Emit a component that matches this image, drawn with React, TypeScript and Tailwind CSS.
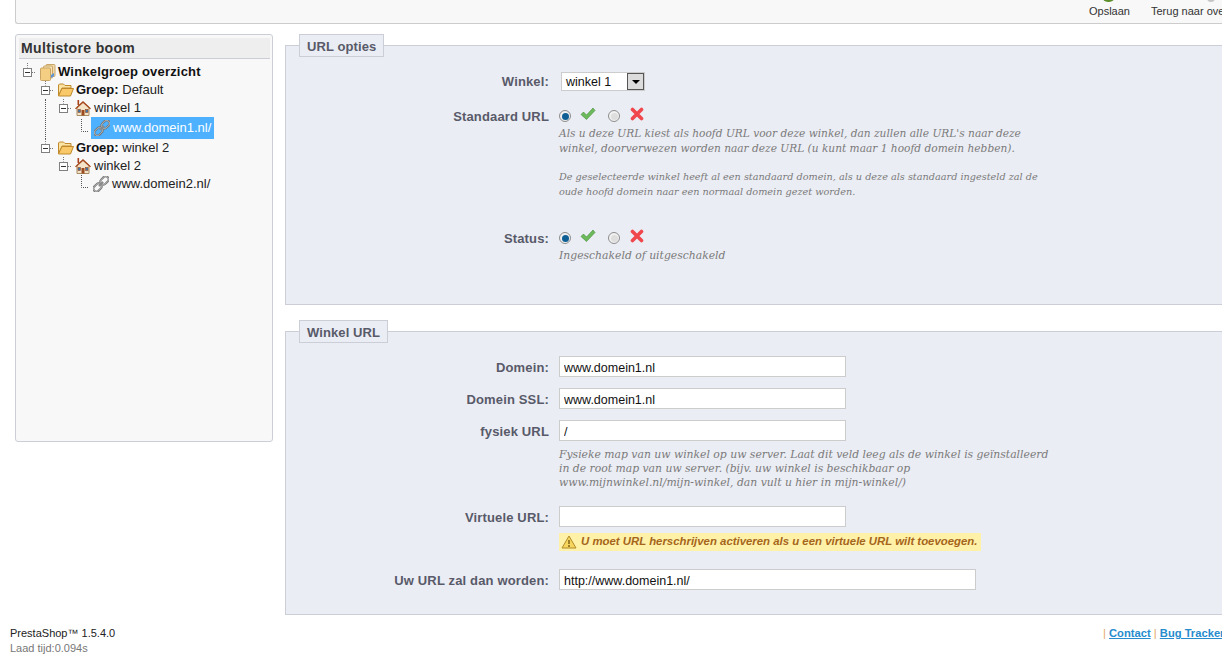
import type { ReactNode } from 'react';

const sans = 'font-["Liberation_Sans",Arial,sans-serif]';
const helpCls = 'font-["DejaVu_Serif",serif] italic text-[#7a7a7a]';

function Expander() {
    return (
        <svg width="12" height="18" viewBox="0 0 12 18" className="shrink-0">
            <path d="M4.5 0V4.5M9 9.5H12" stroke="#777" strokeDasharray="1 1" fill="none" />
            <rect x="0.5" y="5.5" width="8" height="8" fill="#fff" stroke="#808080" />
            <path d="M2 9.5H7" stroke="#333" />
        </svg>
    );
}

function GroupIcon() {
    return (
        <svg width="16" height="17" viewBox="0 0 16 17" className="shrink-0">
            <rect x="6" y="0.5" width="9" height="12" rx="1" fill="#f2dcae" stroke="#c9a566" />
            <rect x="3.5" y="2" width="9" height="12" rx="1" fill="#f6e2b6" stroke="#c9a566" />
            <rect x="0.5" y="4" width="10" height="12.5" rx="1" fill="#f4cf83" stroke="#c9a566" />
            <path d="M11 11l3-2v3l-3 2z" fill="#5b96d8" />
        </svg>
    );
}

function FolderIcon() {
    return (
        <svg width="16" height="14" viewBox="0 0 16 14" className="shrink-0">
            <path d="M0.5 12.5V2l1-1h4l1.5 1.5h6v2.5H4L0.5 12.5z" fill="#fbe3a4" stroke="#c08a2c" />
            <path d="M0.5 13l3.5-7.5h11.5l-3 7.5z" fill="#f9c969" stroke="#c08a2c" />
        </svg>
    );
}

function HouseIcon() {
    return (
        <svg width="16" height="16" viewBox="0 0 16 16" className="shrink-0">
            <path d="M2 15.5V7L8 2l6 5v8.5z" fill="#f3e3c8" stroke="#a98c63" />
            <path d="M0 8.5L8 1l8 7.5-1 .8L8 3 1 9.3z" fill="#a8481e" />
            <rect x="2.5" y="0" width="1.6" height="5" fill="#a8431c" />
            <rect x="6.5" y="10" width="3" height="5.5" fill="#9c4a1f" />
            <rect x="3" y="9.5" width="2.5" height="3" fill="#3f78ad" stroke="#9c4a1f" strokeWidth="0.6" />
            <rect x="10.5" y="9.5" width="2.5" height="3" fill="#3f78ad" stroke="#9c4a1f" strokeWidth="0.6" />
        </svg>
    );
}

function ChainIcon() {
    return (
        <svg width="16" height="16" viewBox="0 0 16 16" className="shrink-0" fill="none">
            <g transform="rotate(-45 8 8)">
                <rect x="-1.5" y="5" width="9" height="6" rx="3" stroke="#6b6b6b" strokeWidth="2" />
                <rect x="-1.5" y="5" width="9" height="6" rx="3" stroke="#d6d6d6" strokeWidth="0.7" />
                <rect x="8.5" y="5" width="9" height="6" rx="3" stroke="#6b6b6b" strokeWidth="2" />
                <rect x="8.5" y="5" width="9" height="6" rx="3" stroke="#d6d6d6" strokeWidth="0.7" />
                <path d="M5 8h6" stroke="#8a8a8a" strokeWidth="2" />
            </g>
        </svg>
    );
}

function Connector() {
    return (
        <svg width="10" height="18" viewBox="0 0 10 18" className="shrink-0">
            <path d="M0.5 0V12.5H7" stroke="#555" strokeDasharray="1 1" fill="none" />
        </svg>
    );
}

function Radio({ on }: { on?: boolean }) {
    return (
        <span className="w-[12px] h-[12px] rounded-full border border-[#8d8d8d] bg-[#f1f1f1] flex items-center justify-center shrink-0">
            <span className={on ? 'w-[7px] h-[7px] rounded-full bg-[#0f5f94]' : 'w-[7px] h-[7px] rounded-full bg-[#dedede]'}></span>
        </span>
    );
}

function Check() {
    return (
        <svg width="16" height="14" viewBox="0 0 16 14" className="shrink-0">
            <path d="M1 7.5l2.5-2.5 3 3L13 1l2 2.5L6.5 12.5z" fill="#6dba5c" stroke="#3f8a36" strokeWidth="0.6" />
        </svg>
    );
}

function Cross() {
    return (
        <svg width="14" height="14" viewBox="0 0 14 14" className="shrink-0">
            <path d="M2.5 2.5l9 9M11.5 2.5l-9 9" stroke="#f0474d" strokeWidth="3.6" strokeLinecap="round" />
        </svg>
    );
}

function Toggle() {
    return (
        <div className="flex items-center -mt-[2px]">
            <Radio on />
            <span className="ml-[9px] -mt-[4px]"><Check /></span>
            <span className="ml-[12px]"><Radio /></span>
            <span className="ml-[10px] -mt-[4px]"><Cross /></span>
        </div>
    );
}

function Row({ label, labelClass, className, children }: { label: string; labelClass?: string; className?: string; children: ReactNode }) {
    return (
        <div className={`flex items-center ${className ?? ''}`}>
            <label className={`${labelClass ?? ''} w-[263px] text-right font-bold text-[13px] leading-[15px] text-[#585a69] whitespace-nowrap tracking-[0.15px]`}>{label}</label>
            <div className="ml-[10px]">{children}</div>
        </div>
    );
}

function Input({ value, wide }: { value?: string; wide?: boolean }) {
    return (
        <input
            readOnly
            value={value ?? ''}
            className={`${wide ? 'w-[417px]' : 'w-[287px]'} block h-[21px] bg-white border border-[#cccccc] px-[4px] pt-[2px] text-[12.5px] text-[#111] outline-none`}
        />
    );
}

function Box({ title, className, children }: { title: string; className?: string; children: ReactNode }) {
    return (
        <fieldset className={`bg-[#ebedf4] border-y border-l border-[#ccced7] ${className ?? ''}`}>
            <legend className="ml-[13px] h-[23px] px-[7px] border border-[#ccced7] bg-[#ebedf4] font-bold text-[13px] leading-[23px] text-[#585a69] tracking-[0.1px]">{title}</legend>
            {children}
        </fieldset>
    );
}

export default function App() {
    return (
        <div className={`w-[1222px] h-[654px] overflow-hidden bg-white ${sans}`}>
            {/* toolbar, cut off at the top of the page */}
            <div className="ml-[15px] h-[24px] bg-[#f8f8f8] border-l border-b border-[#cccccc] rounded-bl-[3px] pl-[1073px] flex text-[11px] text-[#333] whitespace-nowrap overflow-hidden">
                <div className="w-[40px] relative pt-[3px] text-center">
                    <span className="absolute left-[13px] -top-[10px] w-[13px] h-[12px] rounded-full bg-[#5d8f2b]"></span>
                    Opslaan
                </div>
                <div className="ml-[22px] relative pt-[3px]">
                    <span className="absolute left-[56px] -top-[10px] w-[8px] h-[12px] rounded-full bg-[#c4c4c4]"></span>
                    Terug naar overzicht
                </div>
            </div>

            <div className="flex pt-[10px] pl-[15px]">
                {/* tree */}
                <div className="w-[258px] h-[408px] shrink-0 bg-[#f8f8f8] border border-[#ccced7] rounded-[3px] pl-[3px] pr-[2px] py-[3px]">
                    <h2 className="h-[21px] bg-[#eeeeee] border-b border-[#ccced7] pl-[2px] font-bold text-[14px] leading-[20px] text-[#333] tracking-[0.35px]">Multistore boom</h2>
                    <div className="pt-[4px] pl-[4px] text-[13px] text-[#222] whitespace-nowrap">
                        <div className="h-[18px] flex items-center font-bold text-[#111] tracking-[0.2px]">
                            <Expander />
                            <span className="ml-[5px]"><GroupIcon /></span>
                            <span className="ml-[2px]">Winkelgroep overzicht</span>
                        </div>
                        <div className="h-[18px] ml-[18px] flex items-center">
                            <Expander />
                            <span className="ml-[5px]"><FolderIcon /></span>
                            <span className="ml-[2px]"><b className="text-[#111]">Groep:</b> Default</span>
                        </div>
                        <div className="ml-[22px] border-l border-dotted border-[#555]">
                            <div className="h-[18px] pl-[13px] flex items-center">
                                <Expander />
                                <span className="ml-[4px]"><HouseIcon /></span>
                                <span className="ml-[3px]">winkel 1</span>
                            </div>
                            <div className="h-[22px] pl-[35px] flex items-center">
                                <Connector />
                                <span className="h-[22px] w-[123px] bg-[#4db1ff] text-white flex items-center pl-[3px]">
                                    <ChainIcon />
                                    <span className="ml-[3px]">www.domein1.nl/</span>
                                </span>
                            </div>
                        </div>
                        <div className="h-[18px] ml-[18px] flex items-center">
                            <Expander />
                            <span className="ml-[5px]"><FolderIcon /></span>
                            <span className="ml-[2px]"><b className="text-[#111]">Groep:</b> winkel 2</span>
                        </div>
                        <div className="ml-[22px] pl-[1px]">
                            <div className="h-[18px] pl-[13px] flex items-center">
                                <Expander />
                                <span className="ml-[4px]"><HouseIcon /></span>
                                <span className="ml-[3px]">winkel 2</span>
                            </div>
                            <div className="h-[18px] pl-[35px] flex items-center">
                                <Connector />
                                <span className="ml-[2px]"><ChainIcon /></span>
                                <span className="ml-[3px]">www.domein2.nl/</span>
                            </div>
                        </div>
                    </div>
                </div>

                {/* form */}
                <div className="ml-[12px] w-[937px] shrink-0">
                    <Box title="URL opties" className="pb-[41px]">
                        <Row label="Winkel:" className="mt-[15px]">
                            <div className="ml-[2px] w-[84px] h-[19px] bg-white border border-[#cccccc] flex items-center justify-between text-[12.5px] text-[#111] pl-[4px]">
                                <span className="pt-[1px]">winkel 1</span>
                                <span className="w-[17px] h-[17px] bg-[#dcdcdc] border border-[#555] flex items-center justify-center">
                                    <span className="border-x-[4px] border-x-transparent border-t-[4px] border-t-black"></span>
                                </span>
                            </div>
                        </Row>
                        <Row label="Standaard URL" labelClass="pb-[2px]" className="mt-[17px] h-[18px]"><Toggle /></Row>
                        <div className={`ml-[273px] w-[520px] leading-[15px] ${helpCls}`}>
                            <p className="text-[10.6px]">Als u deze URL kiest als hoofd URL voor deze winkel, dan zullen alle URL's naar deze<br />winkel, doorverwezen worden naar deze URL (u kunt maar 1 hoofd domein hebben).</p>
                            <p className="mt-[13px] text-[9.7px]">De geselecteerde winkel heeft al een standaard domein, als u deze als standaard ingesteld zal de<br />oude hoofd domein naar een normaal domein gezet worden.</p>
                        </div>
                        <Row label="Status:" labelClass="pb-[2px]" className="mt-[31px] h-[18px]"><Toggle /></Row>
                        <p className={`ml-[273px] leading-[15px] text-[10.8px] ${helpCls}`}>Ingeschakeld of uitgeschakeld</p>
                    </Box>

                    <Box title="Winkel URL" className="mt-[15px] pb-[24px]">
                        <Row labelClass="pt-[1px]" label="Domein:" className="mt-[13px]"><Input value="www.domein1.nl" /></Row>
                        <Row labelClass="pt-[1px]" label="Domein SSL:" className="mt-[11px]"><Input value="www.domein1.nl" /></Row>
                        <Row labelClass="pt-[1px]" label="fysiek URL" className="mt-[11px]"><Input value="/" /></Row>
                        <p className={`ml-[273px] mt-[7px] leading-[14px] text-[10.8px] ${helpCls}`}>
                            Fysieke map van uw winkel op uw server. Laat dit veld leeg als de winkel is geïnstalleerd<br />
                            in de root map van uw server. (bijv. uw winkel is beschikbaar op<br />
                            www.mijnwinkel.nl/mijn-winkel, dan vult u hier in mijn-winkel/)
                        </p>
                        <Row labelClass="pt-[1px]" label="Virtuele URL:" className="mt-[16px]"><Input /></Row>
                        <div className="ml-[273px] mt-[6px] w-[422px] h-[18px] bg-[#fff1a8] flex items-center pl-[2px] font-bold italic text-[11.4px] text-[#a5651a] whitespace-nowrap">
                            <svg width="16" height="14" viewBox="0 0 16 14" className="shrink-0">
                                <path d="M8 1L15 13H1z" fill="#f7d65f" stroke="#b28a2a" strokeLinejoin="round" />
                                <path d="M8 5v4M8 10v2" stroke="#7a5a12" strokeWidth="1.4" />
                            </svg>
                            <span className="ml-[4px]">U moet URL herschrijven activeren als u een virtuele URL wilt toevoegen.</span>
                        </div>
                        <Row labelClass="pt-[1px]" label="Uw URL zal dan worden:" className="mt-[18px]"><Input value="http://www.domein1.nl/" wide /></Row>
                    </Box>
                </div>
            </div>

            <footer className="flex pt-[11px] text-[11px] leading-[15px]">
                <div className="w-[1103px] shrink-0 pl-[10px]">
                    <div className="text-[#222]">PrestaShop™ 1.5.4.0</div>
                    <div className="text-[#777]">Laad tijd:0.094s</div>
                </div>
                <div className="text-[11.2px] font-bold text-[#268ccd] whitespace-nowrap">
                    <span className="font-normal text-[#e5a964]">| </span><span className="underline">Contact</span>
                    <span className="font-normal text-[#e5a964]"> | </span><span className="underline">Bug Tracker</span>
                </div>
            </footer>
        </div>
    );
}
